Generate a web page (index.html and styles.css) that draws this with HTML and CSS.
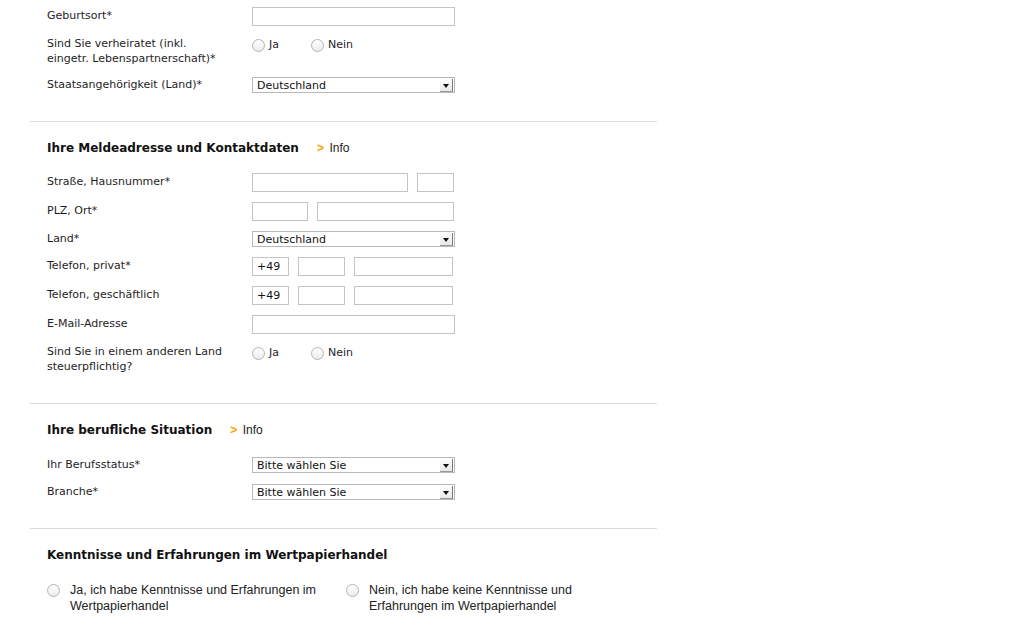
FILE: index.html
```html
<!DOCTYPE html>
<html lang="de">
<head>
<meta charset="UTF-8">
<meta name="viewport" content="width=device-width, initial-scale=1.0">
<title>Antrag</title>
<link rel="stylesheet" href="styles.css">
</head>
<body>
<div class="form">
    <div class="section first">
        <div class="row">
            <div class="label">Geburtsort*</div>
            <div class="field"><span class="input w-full"></span></div>
        </div>
        <div class="row">
            <div class="label multi">Sind Sie verheiratet (inkl.<br>eingetr. Lebenspartnerschaft)*</div>
            <div class="field radios">
                <label class="option"><span class="radio"></span>Ja</label>
                <label class="option"><span class="radio"></span>Nein</label>
            </div>
        </div>
        <div class="row">
            <div class="label sel">Staatsangehörigkeit (Land)*</div>
            <div class="field">
                <div class="select"><span class="value">Deutschland</span><span class="arrow"></span></div>
            </div>
        </div>
    </div>

    <div class="section">
        <h2>Ihre Meldeadresse und Kontaktdaten <a class="info"><b>&gt;</b> Info</a></h2>
        <div class="row">
            <div class="label">Straße, Hausnummer*</div>
            <div class="field"><span class="input w-street"></span><span class="input w-nr"></span></div>
        </div>
        <div class="row">
            <div class="label">PLZ, Ort*</div>
            <div class="field"><span class="input w-plz"></span><span class="input w-ort"></span></div>
        </div>
        <div class="row">
            <div class="label sel">Land*</div>
            <div class="field">
                <div class="select"><span class="value">Deutschland</span><span class="arrow"></span></div>
            </div>
        </div>
        <div class="row">
            <div class="label">Telefon, privat*</div>
            <div class="field"><span class="input w-cc">+49</span><span class="input w-area"></span><span class="input w-tel"></span></div>
        </div>
        <div class="row">
            <div class="label">Telefon, geschäftlich</div>
            <div class="field"><span class="input w-cc">+49</span><span class="input w-area"></span><span class="input w-tel"></span></div>
        </div>
        <div class="row">
            <div class="label">E-Mail-Adresse</div>
            <div class="field"><span class="input w-full"></span></div>
        </div>
        <div class="row">
            <div class="label multi">Sind Sie in einem anderen Land<br>steuerpflichtig?</div>
            <div class="field radios">
                <label class="option"><span class="radio"></span>Ja</label>
                <label class="option"><span class="radio"></span>Nein</label>
            </div>
        </div>
    </div>

    <div class="section">
        <h2 class="roomy">Ihre berufliche Situation <a class="info"><b>&gt;</b> Info</a></h2>
        <div class="row wide">
            <div class="label sel">Ihr Berufsstatus*</div>
            <div class="field">
                <div class="select"><span class="value">Bitte wählen Sie</span><span class="arrow"></span></div>
            </div>
        </div>
        <div class="row">
            <div class="label sel">Branche*</div>
            <div class="field">
                <div class="select"><span class="value">Bitte wählen Sie</span><span class="arrow"></span></div>
            </div>
        </div>
    </div>

    <div class="section last">
        <h2>Kenntnisse und Erfahrungen im Wertpapierhandel</h2>
        <div class="choices">
            <label class="choice"><span class="radio big"></span><span class="text">Ja, ich habe Kenntnisse und Erfahrungen im Wertpapierhandel</span></label>
            <label class="choice"><span class="radio big"></span><span class="text">Nein, ich habe keine Kenntnisse und Erfahrungen im Wertpapierhandel</span></label>
        </div>
    </div>
</div>
</body>
</html>
```

FILE: styles.css
```css
* {
    box-sizing: border-box;
    margin: 0;
    padding: 0;
}

body {
    background: #fff;
    color: #1e1e1e;
    font-family: 'DejaVu Sans', Verdana, sans-serif;
    font-size: 11px;
    line-height: 16px;
}

.form {
    width: 627px;
    margin-left: 30px;
}

.section {
    padding: 18px 0 18px 17px;
    border-bottom: 1px solid #dcdcdc;
}

.section.first {
    padding-top: 7px;
}

.section.last {
    border-bottom: none;
}

h2 {
    font-size: 12px;
    font-weight: bold;
    line-height: 16px;
    color: #111;
    margin-bottom: 17px;
}

h2.roomy {
    margin-bottom: 19px;
}

.info {
    font-family: 'Liberation Sans', Arial, sans-serif;
    font-weight: normal;
    font-size: 12px;
    color: #222;
    margin-left: 14px;
}

.info b {
    color: #f5a400;
    margin-right: 2px;
}

.row {
    display: flex;
    margin-bottom: 10px;
}

.row.wide {
    margin-bottom: 11px;
}

.label {
    width: 205px;
    flex-shrink: 0;
    padding-top: 1px;
}

.label.sel {
    padding-top: 0;
}

.label.multi {
    padding-top: 0;
    line-height: 15px;
    min-height: 31px;
}

.field {
    display: flex;
    gap: 9px;
}

.input {
    display: block;
    height: 19px;
    border: 1px solid #c4c4c4;
    background: #fff;
    padding: 0 4px;
    line-height: 17px;
    color: #111;
}

.w-full { width: 203px; }
.w-street { width: 156px; }
.w-nr { width: 37px; }
.w-plz { width: 56px; }
.w-ort { width: 137px; }
.w-cc { width: 37px; }
.w-area { width: 47px; }
.w-tel { width: 99px; }

.select {
    display: flex;
    width: 203px;
    height: 16px;
    border: 1px solid #b8b8b8;
    background: #fff;
}

.select .value {
    flex: 1;
    padding-left: 4px;
    line-height: 15px;
    color: #111;
}

.select .arrow {
    position: relative;
    width: 13px;
    margin: 1px 1px 0 0;
    background: linear-gradient(#fdfdfd, #e8e8e8);
    border-right: 1px solid #777;
    border-bottom: 1px solid #999;
}

.select .arrow::after {
    content: '';
    position: absolute;
    left: 3px;
    top: 5px;
    border-left: 3px solid transparent;
    border-right: 3px solid transparent;
    border-top: 4px solid #111;
}

.radios {
    gap: 0;
    padding-top: 1px;
}

.option {
    display: flex;
    align-items: center;
    width: 59px;
    height: 16px;
}

.radio {
    display: inline-block;
    width: 13px;
    height: 13px;
    border: 1px solid #b4b4b4;
    border-radius: 50%;
    background: linear-gradient(#ffffff, #ececec);
    margin-right: 4px;
    flex-shrink: 0;
}

.choices {
    display: flex;
    padding-top: 2px;
}

.choice {
    display: flex;
    align-items: flex-start;
    width: 299px;
}

.radio.big {
    margin: 2px 10px 0 0;
}

.choice .text {
    width: 258px;
    font-family: 'Liberation Sans', Arial, sans-serif;
    font-size: 12.5px;
    line-height: 16px;
    color: #222;
}
```
